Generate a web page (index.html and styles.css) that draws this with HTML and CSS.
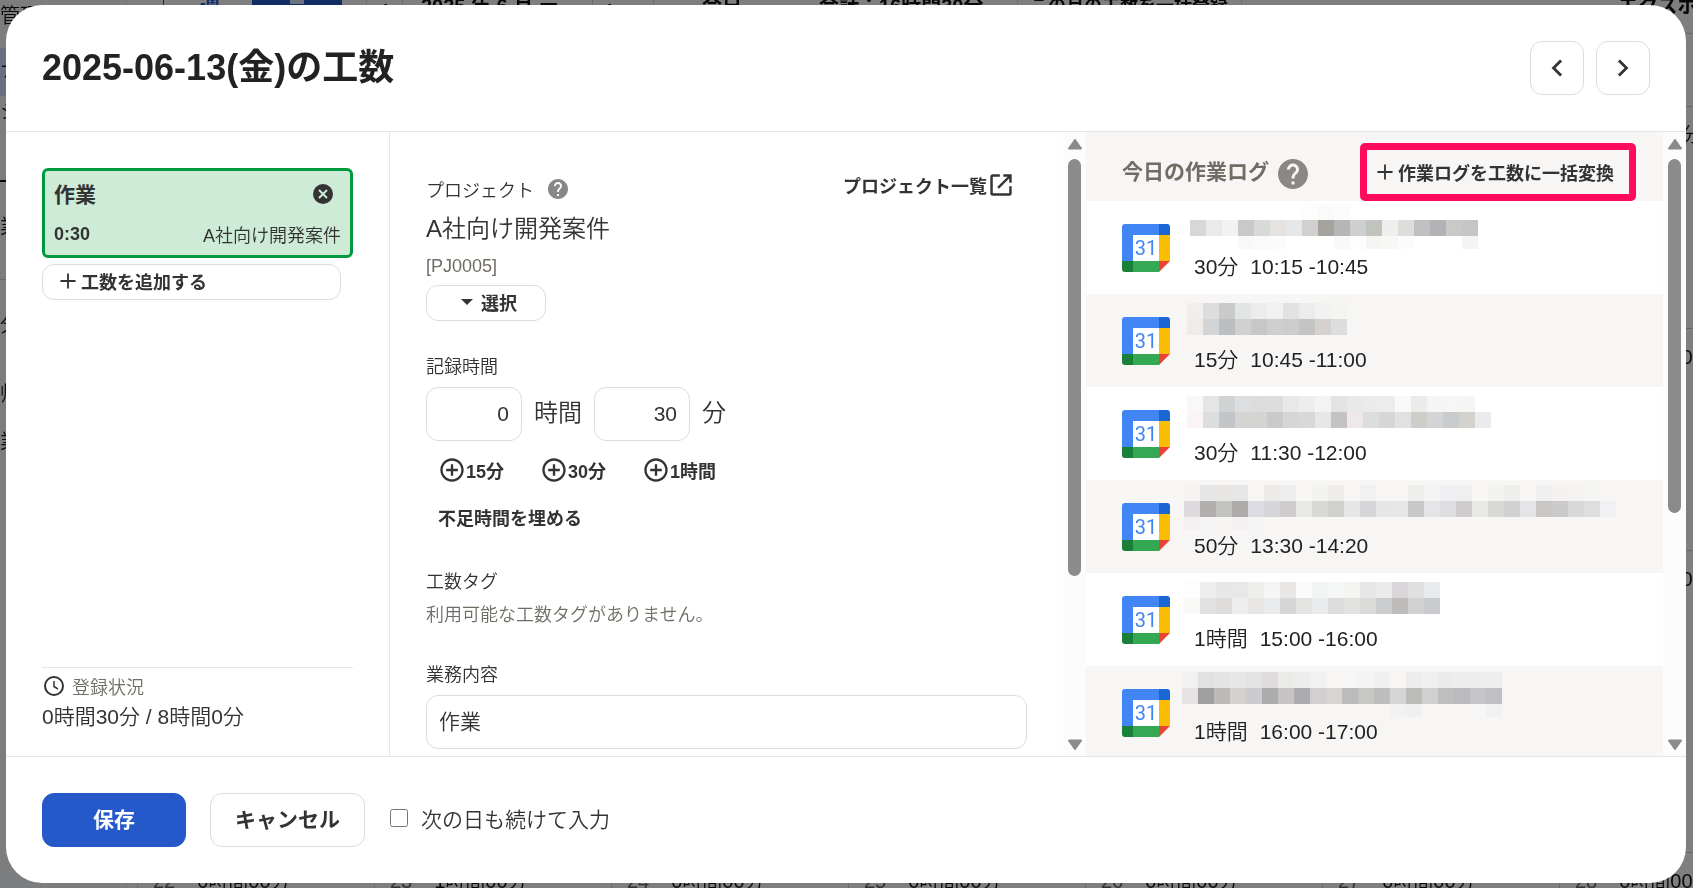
FILE: index.html
```html
<!DOCTYPE html>
<html lang="ja">

<head>
    <meta charset="utf-8">
    <title>2025-06-13(金)の工数</title>
    <link rel="stylesheet" href="styles.css">
</head>

<body>
    <!-- Shared icons -->
    <svg class="sprite" aria-hidden="true">
        <symbol id="plus" viewBox="0 0 24 24"><path d="M12 5v14M5 12h14" fill="none" stroke="currentColor" stroke-width="1.7"/></symbol>
        <symbol id="plus-circle" viewBox="0 0 24 24"><path d="M13 7h-2v4H7v2h4v4h2v-4h4v-2h-4V7zm-1-5C6.48 2 2 6.48 2 12s4.48 10 10 10 10-4.48 10-10S17.52 2 12 2zm0 18c-4.41 0-8-3.59-8-8s3.59-8 8-8 8 3.59 8 8-3.59 8-8 8z" fill="currentColor"/></symbol>
        <symbol id="help" viewBox="0 0 24 24"><path d="M12 2C6.48 2 2 6.48 2 12s4.48 10 10 10 10-4.48 10-10S17.52 2 12 2zm1 17h-2v-2h2v2zm2.07-7.75l-.9.92C13.45 12.9 13 13.5 13 15h-2v-.5c0-1.1.45-2.1 1.17-2.83l1.24-1.26c.37-.36.59-.86.59-1.41 0-1.1-.9-2-2-2s-2 .9-2 2H8c0-2.21 1.79-4 4-4s4 1.79 4 4c0 .88-.36 1.68-.93 2.25z" fill="#8a8886"/></symbol>
        <symbol id="arrow" viewBox="0 0 16 12"><path d="M8 2L14 10.500H2Z" fill="#8b8b8b" stroke="#8b8b8b" stroke-width="2" stroke-linejoin="round"/></symbol>
        <symbol id="gcal" viewBox="0 0 48 48">
            <path d="M11 11h26v26H11z" fill="#fff"/>
            <path d="M3 0h34v11H11v26H0V3a3 3 0 0 1 3-3z" fill="#4285f4"/>
            <path d="M37 0h8a3 3 0 0 1 3 3v8H37z" fill="#1967d2"/>
            <path d="M37 11h11v26H37z" fill="#fbbc04"/>
            <path d="M11 37h26v11H11z" fill="#34a853"/>
            <path d="M0 37h11v11H3a3 3 0 0 1-3-3z" fill="#188038"/>
            <path d="M37 37h11L37 48z" fill="#ea4335"/>
            <text x="24" y="31" text-anchor="middle" class="gcal-day">31</text>
        </symbol>
    </svg>

    <!-- Calendar page behind the dialog -->
    <div class="page" aria-hidden="true">
        <div class="side">
            <span class="side-item">管理</span>
            <span class="side-item active">ナビ</span>
            <span class="side-item">シフト</span>
            <span class="side-group">業務</span>
            <span class="side-group">分析</span>
            <span class="side-item">帰属</span>
            <span class="side-item">業務</span>
        </div>
        <div class="main">
            <div class="toolbar">
                <span class="tool week">週</span>
                <span class="tool month"><i></i></span>
                <span class="tool prev">‹</span>
                <span class="tool date">2025 年 6 月 ー</span>
                <span class="tool next">›</span>
                <span class="tool today">今日</span>
                <span class="tool total">合計：16時間30分</span>
                <span class="tool bulk">この月の工数を一括登録</span>
                <span class="tool export">エクスポート</span>
            </div>
            <div class="weekdays"></div>
            <div class="calendar" id="calendar"></div>
        </div>
    </div>
    <div class="overlay"></div>

    <div class="modal" role="dialog" aria-labelledby="title">
        <header class="modal-header">
            <h1 id="title">2025-06-13(金)の工数</h1>
            <div class="day-nav">
                <button type="button" class="btn btn-icon" aria-label="前の日">
                    <svg width="28" height="28" viewBox="0 0 24 24"><path d="M15.500 5.500L9 12l6.500 6.500" fill="none" stroke="currentColor" stroke-width="2.400"/></svg>
                </button>
                <button type="button" class="btn btn-icon" aria-label="次の日">
                    <svg width="28" height="28" viewBox="0 0 24 24"><path d="M8.500 5.500L15 12l-6.500 6.500" fill="none" stroke="currentColor" stroke-width="2.400"/></svg>
                </button>
            </div>
        </header>

        <div class="modal-body">
            <section class="entries">
                <div class="entry">
                    <div class="entry-top">
                        <strong class="entry-name">作業</strong>
                        <button type="button" class="entry-delete" aria-label="削除">
                            <svg width="24" height="24" viewBox="0 0 24 24"><circle cx="12" cy="12" r="10" fill="currentColor"/><path d="M8 8l8 8M16 8l-8 8" stroke="#cdebd7" stroke-width="2"/></svg>
                        </button>
                    </div>
                    <div class="entry-bottom">
                        <strong>0:30</strong>
                        <span>A社向け開発案件</span>
                    </div>
                </div>
                <button type="button" class="btn btn-small btn-add"><svg width="26" height="26"><use href="#plus"/></svg>工数を追加する</button>

                <div class="status">
                    <div class="status-label">
                        <svg width="24" height="24" viewBox="0 0 24 24" fill="none" stroke="currentColor"><circle cx="12" cy="12" r="9" stroke-width="2"/><path d="M12 7v5.500l4 2.500" stroke-width="1.500"/></svg>
                        登録状況
                    </div>
                    <div class="status-value">0時間30分 / 8時間0分</div>
                </div>
            </section>

            <form class="detail" id="detail">
                <div class="project-head">
                    <div>
                        <div class="project-label">プロジェクト<svg width="24" height="24"><use href="#help"/></svg></div>
                        <div class="project-name">A社向け開発案件</div>
                        <div class="project-code">[PJ0005]</div>
                    </div>
                    <a href="#projects" class="project-link">プロジェクト一覧<svg width="28" height="28" viewBox="0 0 24 24"><path d="M11 3.900H5q-1.100 0-1.100 1.100v14q0 1.100 1.100 1.100h14q1.100 0 1.100-1.100v-6M14 3.900h6.100V10M19.500 4.500L9.500 14.500" fill="none" stroke="currentColor" stroke-width="2.100"/></svg></a>
                </div>
                <button type="button" class="btn btn-small btn-select"><svg width="12" height="6" viewBox="0 0 12 6"><path d="M0 0h12L6 6z" fill="currentColor"/></svg>選択</button>

                <label class="field-label" for="hours">記録時間</label>
                <div class="time-row">
                    <input class="input input-time" id="hours" type="text" inputmode="numeric" value="0">
                    <label for="hours">時間</label>
                    <input class="input input-time" id="minutes" type="text" inputmode="numeric" value="30">
                    <label for="minutes">分</label>
                </div>
                <div class="quick-row">
                    <button type="button" class="btn-text"><svg width="28" height="28"><use href="#plus-circle"/></svg>15分</button>
                    <button type="button" class="btn-text"><svg width="28" height="28"><use href="#plus-circle"/></svg>30分</button>
                    <button type="button" class="btn-text"><svg width="28" height="28"><use href="#plus-circle"/></svg>1時間</button>
                </div>
                <button type="button" class="btn-text">不足時間を埋める</button>

                <div class="field-label">工数タグ</div>
                <p class="tag-empty">利用可能な工数タグがありません。</p>

                <label class="field-label" for="content">業務内容</label>
                <input class="input input-wide" id="content" type="text" value="作業">
            </form>
            <div class="scrollbar">
                <svg width="16" height="12"><use href="#arrow"/></svg>
                <div class="track"><div class="thumb thumb-detail"></div></div>
                <svg class="down" width="16" height="12"><use href="#arrow"/></svg>
            </div>

            <section class="logs">
                <div class="logs-header">
                    <h2>今日の作業ログ</h2>
                    <svg width="36" height="36"><use href="#help"/></svg>
                    <div class="callout">
                        <button type="button" class="btn-bulk"><svg width="26" height="26"><use href="#plus"/></svg>作業ログを工数に一括変換</button>
                    </div>
                </div>
                <ul class="log-list">
                    <li class="log">
                        <svg width="48" height="48"><use href="#gcal"/></svg>
                        <div><svg class="mosaic"></svg><div class="log-time"><span>30分</span><span>10:15 -10:45</span></div></div>
                    </li>
                    <li class="log">
                        <svg width="48" height="48"><use href="#gcal"/></svg>
                        <div><svg class="mosaic"></svg><div class="log-time"><span>15分</span><span>10:45 -11:00</span></div></div>
                    </li>
                    <li class="log">
                        <svg width="48" height="48"><use href="#gcal"/></svg>
                        <div><svg class="mosaic"></svg><div class="log-time"><span>30分</span><span>11:30 -12:00</span></div></div>
                    </li>
                    <li class="log">
                        <svg width="48" height="48"><use href="#gcal"/></svg>
                        <div><svg class="mosaic"></svg><div class="log-time"><span>50分</span><span>13:30 -14:20</span></div></div>
                    </li>
                    <li class="log">
                        <svg width="48" height="48"><use href="#gcal"/></svg>
                        <div><svg class="mosaic"></svg><div class="log-time"><span>1時間</span><span>15:00 -16:00</span></div></div>
                    </li>
                    <li class="log">
                        <svg width="48" height="48"><use href="#gcal"/></svg>
                        <div><svg class="mosaic"></svg><div class="log-time"><span>1時間</span><span>16:00 -17:00</span></div></div>
                    </li>
                </ul>
            </section>
            <div class="scrollbar">
                <svg width="16" height="12"><use href="#arrow"/></svg>
                <div class="track"><div class="thumb thumb-logs"></div></div>
                <svg class="down" width="16" height="12"><use href="#arrow"/></svg>
            </div>
        </div>

        <footer class="modal-footer">
            <button type="submit" form="detail" class="btn btn-primary">保存</button>
            <button type="button" class="btn btn-cancel">キャンセル</button>
            <label class="next-day"><input type="checkbox">次の日も続けて入力</label>
        </footer>
    </div>

    <script src="script.js"></script>
</body>

</html>
```
FILE: styles.css
```css
* {
    box-sizing: border-box;
}

body {
    margin: 0;
    height: 100vh;
    overflow: hidden;
    font-family: "Liberation Sans", "Noto Sans CJK JP", sans-serif;
    font-size: 18px;
    font-weight: 350;
    color: #333;
    background-color: #fff;
}

strong {
    font-weight: bold;
}

button,
input {
    font-family: inherit;
    color: inherit;
}

button {
    cursor: pointer;
    font-weight: bold;
}

svg {
    flex: none;
}

.sprite {
    position: absolute;
    width: 0;
    height: 0;
}

/* Page behind the dialog */
.page {
    position: fixed;
    inset: 0;
    display: flex;
    overflow: hidden;
    font-size: 20px;
    color: #111;
}

.side {
    flex: none;
    width: 127px;
    display: flex;
    flex-direction: column;
    background-color: #f8faff;
    border-right: 1px solid #dde2f0;
    white-space: nowrap;
}

.side-item {
    height: 48px;
    line-height: 32px;
}

.side-item.active {
    line-height: 44px;
    background-color: #d3e0ff;
}

.side-group {
    height: 99px;
    line-height: 90px;
    border-top: 1px solid #cdd4ee;
}

.side-item + .side-group {
    margin-top: 36px;
    border-top: 2px solid #111;
}

.main {
    flex: 1;
    min-width: 0;
}

.toolbar {
    display: flex;
    height: 33px;
    padding-left: 36px;
    font-weight: bold;
    line-height: 12px;
    white-space: nowrap;
}

.tool {
    flex: none;
    border-left: 1px solid #ddd;
}

.tool.week {
    width: 89px;
    padding-left: 36px;
    color: #2558c9;
    border-color: #2558c9;
}

.tool.month {
    width: 90px;
    background-color: #2558c9;
    border: none;
}

.tool.month i {
    display: block;
    width: 14px;
    height: 4px;
    margin: 0 auto;
    background-color: #dde6fa;
}

.tool.prev,
.tool.next {
    width: 36px;
    text-align: center;
}

.tool.prev {
    margin-left: 24px;
}

.tool.date {
    width: 190px;
    padding-left: 18px;
}

.tool.today {
    width: 142px;
    margin-left: 25px;
    padding-left: 48px;
}

.tool.total {
    width: 222px;
    padding-left: 24px;
    border: none;
}

.tool.bulk {
    width: 224px;
    padding-left: 12px;
    font-size: 18px;
}

.tool.export {
    flex: 1;
    padding-left: 376px;
}

.weekdays {
    height: 73px;
    border-top: 1px solid #ccc;
}

.calendar {
    display: grid;
    grid-template-columns: repeat(7, 237px);
    grid-template-rows: 222px 222px 302px 222px;
    padding-left: 10px;
}

.day {
    display: flex;
    gap: 22px;
    padding: 14px 15px;
    line-height: 28px;
    border-top: 1px solid #ccc;
    border-left: 1px solid #ddd;
    white-space: nowrap;
}

.day-number {
    color: #666;
}

.overlay {
    position: fixed;
    inset: 0;
    background-color: rgba(0, 0, 0, 0.5);
}

/* Dialog */
.modal {
    position: fixed;
    inset: 5px 7px 5px 6px;
    display: flex;
    flex-direction: column;
    overflow: hidden;
    background-color: #fff;
    border-radius: 36px;
}

.modal-header {
    display: flex;
    align-items: center;
    justify-content: space-between;
    padding: 36px;
    border-bottom: 1px solid #e6e6e6;
}

h1 {
    margin: 0;
    font-size: 36px;
    line-height: 54px;
    color: #222;
}

.day-nav {
    display: flex;
    gap: 12px;
}

.modal-body {
    flex: 1;
    display: flex;
    min-height: 0;
}

.modal-footer {
    display: flex;
    align-items: center;
    gap: 24px;
    padding: 36px;
    border-top: 1px solid #e6e6e6;
}

/* Buttons */
.btn {
    display: flex;
    align-items: center;
    justify-content: center;
    height: 54px;
    padding: 0 24px 4px;
    font-size: 21px;
    background-color: #fff;
    border: 1px solid #dcdcdc;
    border-radius: 12px;
}

.btn-icon {
    width: 54px;
    padding: 0;
}

.btn-small {
    height: 36px;
    padding: 0 12px 2px;
    font-size: 18px;
}

.btn-primary {
    width: 144px;
    color: #fff;
    background-color: #2558c9;
    border-color: #2558c9;
}

.btn-text {
    display: flex;
    align-items: center;
    height: 36px;
    padding: 0 12px 2px;
    font-size: 18px;
    background: none;
    border: none;
}

/* Entry list */
.entries {
    flex: none;
    display: flex;
    flex-direction: column;
    width: 384px;
    padding: 36px 36px 26px;
    border-right: 1px solid #e6e6e6;
}

.entry {
    padding: 0 9px;
    background-color: #cdebd7;
    border: 3px solid #009a3e;
    border-radius: 6px;
}

.entry-top,
.entry-bottom {
    display: flex;
    align-items: center;
    justify-content: space-between;
}

.entry-top {
    height: 46px;
    padding-right: 6px;
}

.entry-bottom {
    height: 38px;
    padding-bottom: 4px;
}

.entry-name {
    padding-bottom: 2px;
    font-size: 21px;
}

.entry-delete {
    display: flex;
    padding: 0;
    background: none;
    border: none;
}

.btn-add {
    justify-content: flex-start;
    margin: 6px 12px 0 0;
}

.status {
    margin-top: auto;
    border-top: 1px solid #e6e6e6;
}

.status-label {
    display: flex;
    align-items: center;
    gap: 6px;
    height: 36px;
    color: #706d65;
}

.status-label svg {
    color: #333;
}

.status-value {
    font-size: 21px;
    line-height: 26px;
}

/* Entry form */
.detail {
    flex: 1;
    min-width: 0;
    overflow: hidden;
    padding: 36px 36px 0;
}

.project-head {
    display: flex;
    align-items: flex-start;
    justify-content: space-between;
    margin-bottom: 1px;
}

.project-label {
    display: flex;
    align-items: center;
    gap: 12px;
    height: 42px;
}

.project-name {
    font-size: 24px;
    line-height: 38px;
}

.project-code {
    line-height: 36px;
    color: #706d65;
}

.project-link {
    display: flex;
    align-items: center;
    height: 34px;
    padding: 0 12px;
    font-weight: bold;
    color: inherit;
    text-decoration: none;
}

.btn-select {
    width: 120px;
    gap: 8px;
    padding-left: 18px;
}

.field-label {
    display: block;
    margin: 31px 0 5px;
    line-height: 30px;
}

.input {
    height: 54px;
    padding: 0 12px;
    font-size: 21px;
    font-weight: 350;
    background-color: #fff;
    border: 1px solid #dcdcdc;
    border-radius: 12px;
}

.input-time {
    width: 96px;
    text-align: right;
}

.input-wide {
    display: block;
    width: 100%;
    padding-bottom: 4px;
}

.time-row {
    display: flex;
    align-items: center;
    gap: 12px;
    font-size: 24px;
}

.time-row label {
    padding-bottom: 8px;
}

.quick-row {
    display: flex;
    gap: 12px;
    margin: 12px 0 11px;
}

.tag-empty {
    margin: -3px 0;
    line-height: 33px;
    color: #706d65;
}

/* Scrollbars */
.scrollbar {
    flex: none;
    display: flex;
    flex-direction: column;
    align-items: center;
    width: 23px;
    padding: 6px 0 5px;
    background-color: #fcfcfc;
}

.scrollbar .down {
    transform: rotate(180deg);
}

.track {
    flex: 1;
    width: 13px;
    padding: 9px 0;
}

.thumb {
    border-radius: 7px;
    background-color: #8b8b8b;
}

.thumb-detail {
    height: 73%;
}

.thumb-logs {
    height: 62%;
}

/* Work logs */
.logs {
    flex: none;
    width: 577px;
    max-width: 36%;
    overflow: hidden;
}

.logs-header {
    display: flex;
    align-items: center;
    gap: 6px;
    height: 69px;
    padding: 11px 27px 0 36px;
    background-color: #f7f6f5;
}

.logs-header h2 {
    margin: 0;
    font-size: 21px;
    line-height: 30px;
    color: #706d65;
    white-space: nowrap;
}

.logs-header > svg {
    margin-top: 4px;
}

.callout {
    margin-left: auto;
    border: 7px solid #ff0a5c;
    border-radius: 5px;
}

.btn-bulk {
    display: flex;
    align-items: center;
    height: 44px;
    padding: 0 15px 0 5px;
    font-size: 18px;
    white-space: nowrap;
    background: none;
    border: none;
}

.log-list {
    margin: 0;
    padding: 0;
    list-style: none;
}

.log {
    display: flex;
    align-items: center;
    gap: 12px;
    height: 93px;
    padding-left: 36px;
}

.log:nth-child(even) {
    background-color: #f7f6f5;
}

.log > div {
    height: 87px;
}

.log-time {
    display: flex;
    gap: 12px;
    padding-left: 12px;
    font-size: 21px;
    line-height: 34px;
    color: #222;
}

.mosaic {
    display: block;
    width: 400px;
    height: 46px;
    overflow: visible;
}

.gcal-day {
    font-family: Roboto, sans-serif;
    font-size: 20px;
    font-weight: 400;
    fill: #4285f4;
}

/* Footer */
.btn-cancel {
    width: 155px;
}

.next-day {
    display: flex;
    align-items: center;
    gap: 13px;
    padding-bottom: 5px;
    font-size: 21px;
}

.next-day input {
    width: 18px;
    height: 18px;
    margin: 0 0 0 1px;
}
```
FILE: script.js
```js
// Pixelated titles: start position, then the colours of each 16px row ("." leaves a cell empty)
const mosaics = [
    { x: 8, y: 0, rows: [
        ". . . . . . . fdfdfc fafafb fcfcfd . . . . . . . .",
        "d8d7d5 e8eaec f2f2f2 c9c9c8 d8dad9 e6e2df e6e7e9 d0d0d1 a6a29e b6b6b7 cfcfd1 bfc4bd eeeeee dedddA c0c0c0 b2b3b6 cbc9c8 c5c7c6",
        ". . . f9f8f7 fafafa fbfbfb . . . f9f9f9 fdfdfd f5f5f4 f7f7f6 fcfcfc . . . f5f4f2"] },
    { x: 5, y: 6, rows: [
        "f1eeed dddddf c9caca e3e4e4 ededee f2f1f2 e3e2e3 ececec f2f2f1 f4f4f3",
        "f0eae9 d4d4d6 bcbfc1 d2d1d2 c8c6c7 cfcfcf cecccd c3c4c4 d5d1ce dddddd"] },
    { x: 5, y: 6, rows: [
        "f9f8f7 e4e5e5 d1d3d5 dddedf dcdcda dddddd e7e8e8 edeeec f3f3f3 e3e3e3 e8e9e8 ebebea edebeb f9f9f9 ecebe9 f5f5f7 f6f6f7 f4f5f4",
        "faf5f4 dddddd c2c6c8 d4d4d2 d4d4d3 c9cbca d6d6d6 d8d8d8 e7e7e7 c5c2c3 eee9e8 dcdddf d7d5d6 dfe1e3 cecdca d3d4d5 c9cccc d4d2cd e9ebed"] },
    { x: 2, y: 2, rows: [
        "f5f4f3 e7e6e7 e7e6e4 e8e7e7 . ecebea efeeef . f2f2f1 eeedeb . f2f1f2 . . eeeeed f4f4f5 f0eff1 f0eff0 . f2f2f0 eeeeec . f1f0f1 f5f1f0 f5f4f3 f5f5f4 .",
        "dcdadc b3afaf c2c2c0 adacab dddce4 d5d4d8 cecccd e8e8e7 d8d8d7 d0d0cf e7e6e7 d6d5d7 e7e6e7 e7e7e8 c8c8c8 e5e4e6 dfdfe1 cecccd e8e8e7 d8d8d6 d2d1d2 e5e4e6 cac6c3 cacaca d8d8d8 dedede f1f0f2",
        "f2f0f1 f5f5f6 f6f5f3 f2f0f1 f5f5f5"] },
    { x: 2, y: 6, rows: [
        "fdfdfd eeeeee e7e7e7 e8e8e8 eeefed f5f5f5 e8e7e5 fafafa f2f3f3 f5f7f6 f4f4f2 e7e7e7 ebebeb d8d6d8 e0e0e1 e9eaec",
        "f9f9f7 e1e1e1 dedddb eeeeee e8e7e5 e9ebed d6d6d6 e3e3e2 e8eaec dcdcdd e2e2e1 dadad8 cccdcf bebcba d2d2d3 cacbce"] },
    { x: 0, y: 3, rows: [
        "f2f1f0 e2e1e2 e5e4e4 e8e7e5 e4e3e4 dddbdd ebeae9 ececeb f2f1f2 . . f4f4f5 f0eff0 . eeedeb f1f0f1 ebebea eeedee eeedeb eeeeee",
        "e7e3e2 9f9fa1 bbbab9 d4d1cf cdcbcd abacae c8c4c4 abacb0 d1cfd1 d8d5d1 bbbbbc c8c7c4 bebebf d5d5d5 bcbbb5 d1d0d0 c0bfc0 babbbe c6c5c7 c0bfc5",
        ". . . . . . . . . . . . . f3f2f1 f1f0f1 . . . . f1f0f2"] }
];

document.querySelectorAll(".mosaic").forEach((svg, i) => {
    const { x, y, rows } = mosaics[i];
    rows.forEach((row, r) => {
        row.split(" ").forEach((color, c) => {
            if (color === ".") return;
            const rect = document.createElementNS("http://www.w3.org/2000/svg", "rect");
            rect.setAttribute("x", x + c * 16);
            rect.setAttribute("y", y + r * 16);
            rect.setAttribute("width", 16);
            rect.setAttribute("height", r === 2 ? 13 : 16);
            rect.setAttribute("fill", "#" + color);
            svg.appendChild(rect);
        });
    });
});

// June 2025, the four weeks from the 1st
const calendar = document.getElementById("calendar");
for (let day = 1; day <= 28; day++) {
    const cell = document.createElement("div");
    cell.className = "day";
    const time = day === 23 ? "1時間00分" : "0時間00分";
    cell.innerHTML = `<span class="day-number">${day}</span><span>${time}</span>`;
    calendar.appendChild(cell);
}
```
